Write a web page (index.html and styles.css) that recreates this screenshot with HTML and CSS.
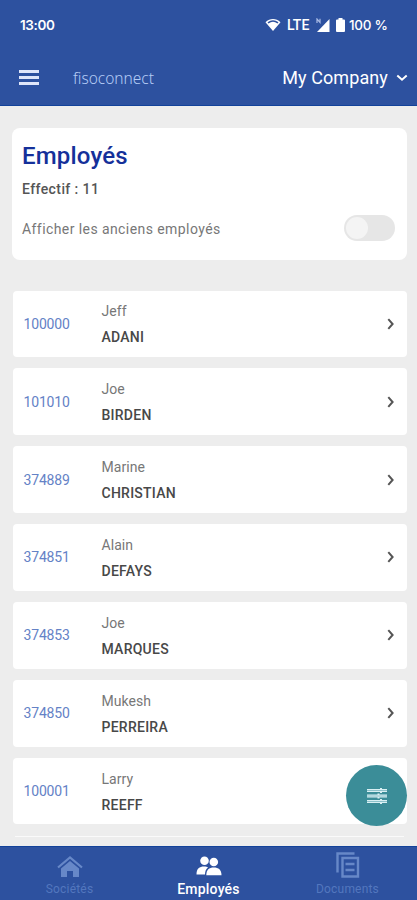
FILE: index.html
```html
<!DOCTYPE html>
<html lang="fr">
<head>
<meta charset="utf-8">
<meta name="viewport" content="width=device-width">
<title>fisoconnect</title>
<link rel="stylesheet" href="styles.css">
</head>
<body>
<header class="header">
  <div class="status">
    <span class="time">13:00</span>
    <svg class="wifi" width="16" height="14" viewBox="0 0 16 14"><path d="M.5 4.200C5-.2 11-.2 15.500 4.200L8 13z" fill="#fff"/><path d="M3 4.900Q8 1.200 13 4.900" fill="none" stroke="#2d519f" stroke-width="1.600"/></svg>
    <span class="lte">LTE</span>
    <svg class="signal" width="14" height="15" viewBox="0 0 14 15"><path d="M13.500 1v13H1z" fill="#fff"/><path d="M1 5V1l3 3.500V.8" fill="none" stroke="#a9bbe4" stroke-width="1.200"/></svg>
    <svg class="battery" width="9" height="14" viewBox="0 0 9 14"><path d="M2.500 0h4v1.500H8q1 0 1 1V13q0 1-1 1H1q-1 0-1-1V2.500q0-1 1-1h1.500z" fill="#fff"/></svg>
    <span class="percent">100 %</span>
  </div>
  <div class="appbar">
    <svg class="menu" width="20" height="15" viewBox="0 0 20 15"><path d="M0 1.500h20M0 7.500h20M0 13.500h20" stroke="#dfe6fa" stroke-width="2.900"/></svg>
    <span class="brand">fisoconnect</span>
    <span class="company">My Company</span>
    <svg class="caret" width="12" height="8" viewBox="0 0 12 8"><path d="M1.300 1.500L6 5.700l4.700-4.200" fill="none" stroke="#fff" stroke-width="2"/></svg>
  </div>
</header>
<main class="content">
  <section class="summary">
    <h1>Employés</h1>
    <p class="count">Effectif : 11</p>
    <div class="filter"><span>Afficher les anciens employés</span><span class="toggle"></span></div>
  </section>
  <ul class="list">
    <li><span class="id">100000</span><div class="name"><span>Jeff</span><b>ADANI</b></div><svg class="go" width="8" height="12" viewBox="0 0 8 12"><path d="M1.300 1.200L5.600 6l-4.300 4.800" /></svg></li>
    <li><span class="id">101010</span><div class="name"><span>Joe</span><b>BIRDEN</b></div><svg class="go" width="8" height="12" viewBox="0 0 8 12"><path d="M1.300 1.200L5.600 6l-4.300 4.800" /></svg></li>
    <li><span class="id">374889</span><div class="name"><span>Marine</span><b>CHRISTIAN</b></div><svg class="go" width="8" height="12" viewBox="0 0 8 12"><path d="M1.300 1.200L5.600 6l-4.300 4.800" /></svg></li>
    <li><span class="id">374851</span><div class="name"><span>Alain</span><b>DEFAYS</b></div><svg class="go" width="8" height="12" viewBox="0 0 8 12"><path d="M1.300 1.200L5.600 6l-4.300 4.800" /></svg></li>
    <li><span class="id">374853</span><div class="name"><span>Joe</span><b>MARQUES</b></div><svg class="go" width="8" height="12" viewBox="0 0 8 12"><path d="M1.300 1.200L5.600 6l-4.300 4.800" /></svg></li>
    <li><span class="id">374850</span><div class="name"><span>Mukesh</span><b>PERREIRA</b></div><svg class="go" width="8" height="12" viewBox="0 0 8 12"><path d="M1.300 1.200L5.600 6l-4.300 4.800" /></svg></li>
    <li><span class="id">100001</span><div class="name"><span>Larry</span><b>REEFF</b></div></li>
  </ul>
  <div class="list-end"></div>
</main>
<div class="fab">
  <svg width="20" height="18" viewBox="0 0 20 18"><path d="M0 3.500h20M0 9h20M0 14.500h20" stroke="#d9f0f3" stroke-width="3"/><path d="M14 1v5M11.500 6.500v5M14 12v5" stroke="#d9f0f3" stroke-width="2"/><path d="M0 3.500h20M0 9h20M0 14.500h20" stroke="#79b5bf" stroke-width=".8"/></svg>
</div>
<nav class="tabs">
  <div class="tab">
    <svg width="26" height="22" viewBox="0 0 26 22"><path d="M1 11.500L13 1.500l12 10" fill="none" stroke="#6788c8" stroke-width="2.200"/><path d="M4 12.500L13 5l9 7.500V21h-6v-6h-6v6H4z" fill="#6788c8"/></svg>
    <span>Sociétés</span>
  </div>
  <div class="tab active">
    <svg width="26" height="20" viewBox="0 0 26 20"><g fill="#fff"><circle cx="8.500" cy="4.800" r="4.300"/><path d="M.5 18.500c0-6 3-8 7.500-8 2 0 3 .3 4 1-2 1.500-3 3.500-3 7z"/><circle cx="17.800" cy="6" r="4.300"/><path d="M10.300 19.300c0-5.500 2.700-7.800 7.500-7.800s7.700 2.300 7.700 7.800z"/></g></svg>
    <span>Employés</span>
  </div>
  <div class="tab">
    <svg width="24" height="26" viewBox="0 0 24 26"><g fill="none" stroke="#6788c8" stroke-width="2.400"><path d="M1.500 20.500V1.500h17"/><path d="M6.500 6h15.500v18.500H6.500z"/><path d="M9.500 12h9M9.500 18h9"/></g></svg>
    <span>Documents</span>
  </div>
</nav>
</body>
</html>
```
FILE: styles.css
```css
* { box-sizing: border-box; margin: 0; padding: 0; }
body { width: 417px; height: 900px; overflow: hidden; display: flex; flex-direction: column; position: relative; background: #ededed; font-family: Roboto, "Liberation Sans", sans-serif; }
svg { display: block; flex: none; }
span, b, h1, p { white-space: nowrap; }

.header { flex: none; height: 106px; background: #2d519f; border-bottom: 1px solid #12429a; color: #fff; }
.status { height: 50px; display: flex; align-items: center; padding: 0 29px 0 20px; font-size: 14px; font-weight: 500; }
.time { font-family: Inter, sans-serif; font-weight: 600; font-size: 13.5px; letter-spacing: -.4px; margin-right: auto; }
.lte { margin-left: 6px; width: 25px; font-size: 14px; }
.signal { margin-left: 4px; }
.battery { margin-left: 6px; }
.percent { margin-left: 4px; width: 39px; font-family: Inter, sans-serif; font-size: 13.5px; letter-spacing: -.3px; }
.appbar { height: 55px; display: flex; align-items: center; padding: 0 9px 0 19px; }
.brand { margin-left: 34px; font-family: "Noto Sans", sans-serif; font-weight: 300; font-size: 15.5px; color: #b4cbf5; }
.company { margin-left: auto; font-size: 18px; line-height: 22px; letter-spacing: .1px; }
.caret { margin-left: 8px; }

.content { flex: 1; min-height: 0; padding: 22px 10px 0 11.500px; display: flex; flex-direction: column; }
.summary { flex: none; height: 132px; border-radius: 8px; background: #fff; padding: 14px 12px 0 10.500px; }
.summary h1 { font-size: 24px; line-height: 28px; font-weight: 500; color: #15309a; letter-spacing: .2px; }
.count { margin-top: 10px; font-size: 14px; line-height: 18px; font-weight: 500; color: #555; letter-spacing: .4px; }
.filter { margin-top: 17px; display: flex; align-items: center; justify-content: space-between; height: 26px; font-size: 14px; color: #777; letter-spacing: .42px; }
.filter span:first-child { padding-top: 1px; }
.toggle { width: 51px; height: 26px; border-radius: 13px; background: #e6e6e6; padding: 2px; }
.toggle::before { content: ""; display: block; width: 22px; height: 22px; border-radius: 50%; background: #f4f4f4; }

.list { flex: none; list-style: none; margin-top: 30.500px; display: grid; gap: 11.200px; }
.list li { height: 66.700px; margin-left: 1px; border-radius: 4px; background: #fff; display: flex; align-items: center; padding: 0 12.500px 0 11px; }
.id { width: 78px; font-size: 14px; color: #6482c6; letter-spacing: -.17px; }
.name { display: flex; flex-direction: column; font-size: 14px; line-height: 26px; color: #777; padding-top: 1px; }
.name span { letter-spacing: .05px; }
.name b { font-weight: 500; color: #484848; letter-spacing: .25px; }
.go { margin-left: auto; fill: none; stroke: #555; stroke-width: 2; }
.list-end { flex: none; height: 1px; margin: 11.500px 3px 0; background: #fafafa; }

.fab { position: absolute; left: 346px; top: 765px; width: 61px; height: 61px; border-radius: 50%; background: #3b8d98; display: flex; align-items: center; justify-content: center; }

.tabs { flex: none; height: 54px; background: #2d519f; border-top: 1px solid #12429a; display: grid; grid-template-columns: repeat(3, 1fr); }
.tab { display: flex; flex-direction: column; align-items: center; justify-content: flex-end; padding-bottom: 3px; font-size: 12px; line-height: 16px; color: #5377be; letter-spacing: .2px; }
.tab svg { margin-bottom: 3px; }
.active { font-size: 14px; font-weight: 500; color: #fff; }
.active svg { margin-bottom: 5px; }
```
